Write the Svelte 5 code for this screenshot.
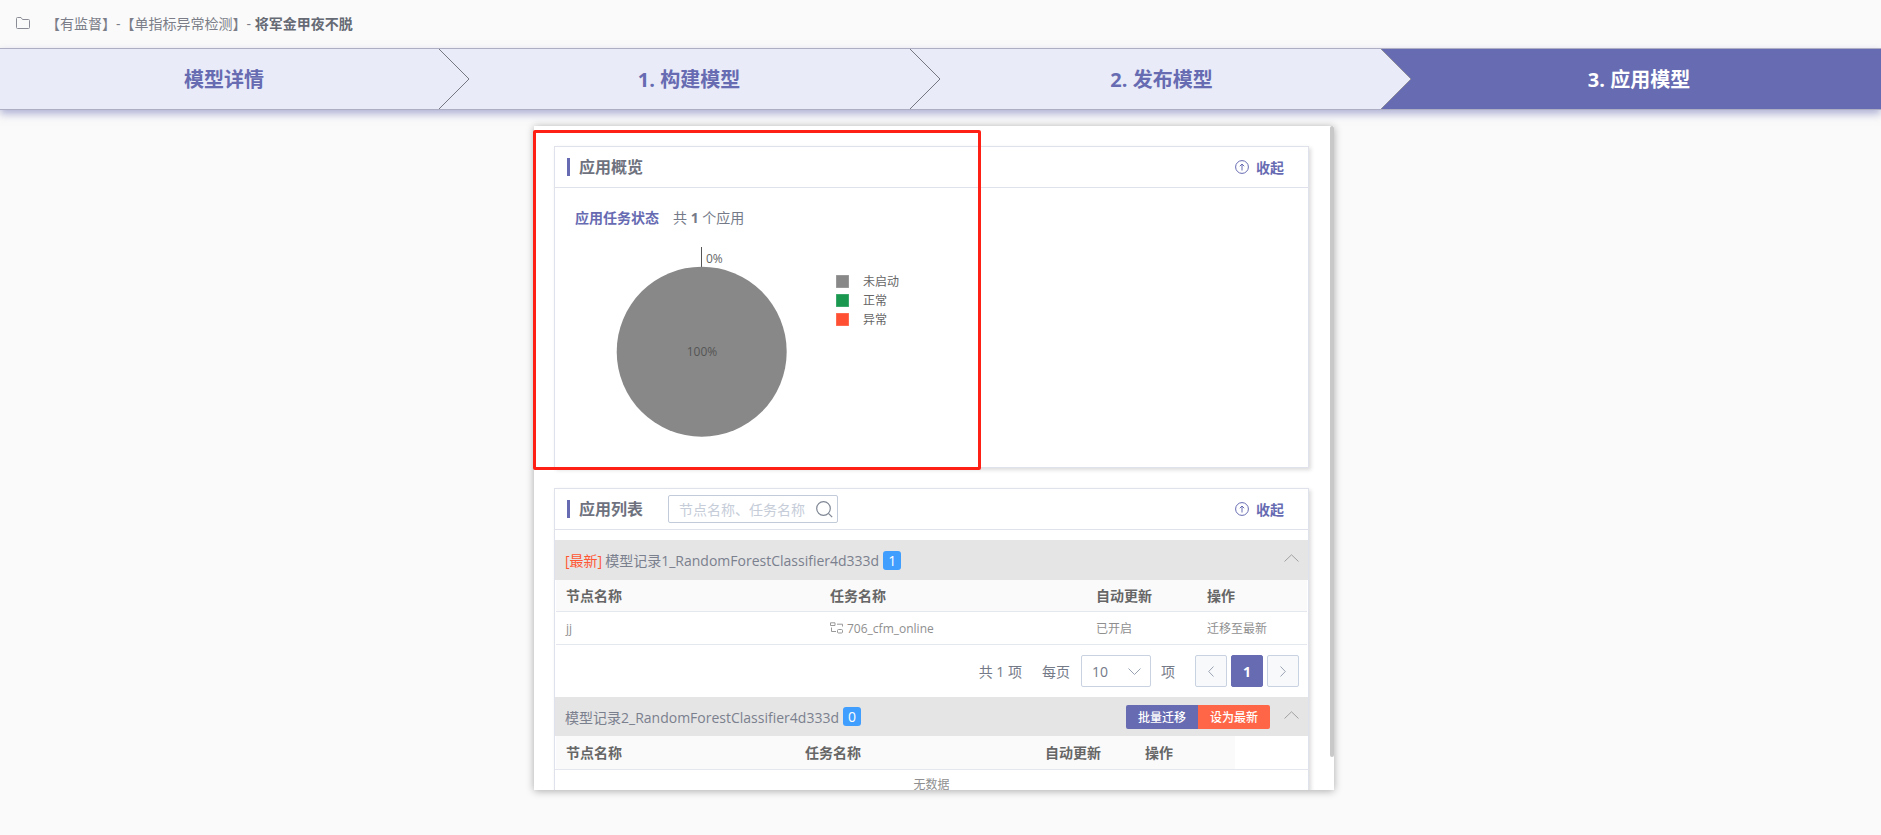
<script>
  const steps = ['模型详情', '1. 构建模型', '2. 发布模型', '3. 应用模型'];
  const legend = [
    { label: '未启动', color: '#888888', y: 35 },
    { label: '正常', color: '#1a9850', y: 54 },
    { label: '异常', color: '#ff5033', y: 73 }
  ];
</script>

<div class="page">
  <div class="crumb">
    <svg class="folder" viewBox="0 0 14 12" width="14" height="12" fill="none" stroke="#8a8d96" stroke-width="1">
      <path d="M0.5 10.5V1.5Q0.5 0.5 1.5 0.5H5L6.5 2.5H12.5Q13.5 2.5 13.5 3.5V10.5Q13.5 11.5 12.5 11.5H1.5Q0.5 11.5 0.5 10.5Z" />
    </svg>
    <span class="crumb-text">【有监督】-【单指标异常检测】- <b>将军金甲夜不脱</b></span>
  </div>

  <nav class="steps">
    {#each steps as step, i}
      <div class="step s{i}" class:active={i === 3}>
        <span>{step}</span>
        {#if i === 2}
          <svg class="tip" viewBox="0 0 30 60" preserveAspectRatio="none">
            <path d="M0 0H30V60H0L30 30Z" fill="#676bb2" />
            <path d="M0 0L30 30L0 60" fill="none" stroke="#8d8d9a" stroke-width="1" />
          </svg>
        {:else if i < 2}
          <svg class="tip" viewBox="0 0 30 60" preserveAspectRatio="none">
            <path d="M0 0L30 30L0 60" fill="none" stroke="#77777f" stroke-width="1" />
          </svg>
        {/if}
      </div>
    {/each}
  </nav>

  <div class="panel-wrap">
    <div class="panel">
      <section class="card first">
        <header class="card-head">
          <h2>应用概览</h2>
          <button class="fold">
            <svg viewBox="0 0 14 14" width="14" height="14" fill="none" stroke="#676bb2" stroke-width="1">
              <circle cx="7" cy="7" r="6.4" /><path d="M7 10.5V4M4.8 6.2L7 4L9.2 6.2" />
            </svg>
            收起
          </button>
        </header>
        <div class="overview">
          <p class="status"><b>应用任务状态</b><span>共 <i>1</i> 个应用</span></p>
          <svg class="chart" viewBox="0 0 300 210" width="300" height="210">
            <line x1="127.5" y1="7" x2="127.5" y2="27" stroke="#555" stroke-width="1" />
            <circle cx="127.7" cy="111.7" r="85" fill="#888888" />
            <text x="132" y="23" class="lab">0%</text>
            <text x="128" y="116" class="lab mid" text-anchor="middle">100%</text>
            {#each legend as item}
              <rect x="262" y={item.y} width="13" height="13" fill={item.color} stroke="#fff" stroke-opacity=".3" />
              <text x="289" y={item.y + 11} class="lab">{item.label}</text>
            {/each}
          </svg>
        </div>
      </section>

      <section class="card">
        <header class="card-head">
          <h2>应用列表</h2>
          <div class="search">
            <span>节点名称、任务名称</span>
            <svg viewBox="0 0 17 17" width="17" height="17" fill="none" stroke="#7f8794" stroke-width="1.2">
              <circle cx="7.5" cy="7.5" r="6.8" /><path d="M12.4 12.4L16.2 16.2" />
            </svg>
          </div>
          <button class="fold">
            <svg viewBox="0 0 14 14" width="14" height="14" fill="none" stroke="#676bb2" stroke-width="1">
              <circle cx="7" cy="7" r="6.4" /><path d="M7 10.5V4M4.8 6.2L7 4L9.2 6.2" />
            </svg>
            收起
          </button>
        </header>

        <div class="group g1">
          <div class="group-name">
            <em>[最新]</em> 模型记录1_RandomForestClassifier4d333d <span class="badge">1</span>
          </div>
          <svg class="caret" viewBox="0 0 15 8" width="15" height="8" fill="none" stroke="#a0a0a0"><path d="M0.5 7.5L7.5 0.8L14.5 7.5" /></svg>
        </div>
        <div class="tbl t1 thead">
          <div>节点名称</div><div>任务名称</div><div>自动更新</div><div>操作</div>
        </div>
        <div class="tbl t1 trow">
          <div>jj</div>
          <div class="task">
            <svg viewBox="0 0 13 12" width="13" height="12" fill="none" stroke="#999" stroke-width="1">
              <path d="M0.5 0.8H5V3.5H0.5ZM7 2.2H12.5V4.5M1.5 5.5V9.5H6" /><rect x="7.5" y="7.5" width="5" height="3.5" rx="1" />
            </svg>
            706_cfm_online
          </div>
          <div>已开启</div>
          <div>迁移至最新</div>
        </div>
        <div class="pager">
          <span>共 1 项</span>
          <span class="per">每页</span>
          <div class="select">
            <span>10</span>
            <svg viewBox="0 0 13 7" width="13" height="7" fill="none" stroke="#9aa3b2"><path d="M0.5 0.5L6.5 6.5L12.5 0.5" /></svg>
          </div>
          <span>项</span>
          <div class="pages">
            <button class="pg"><svg viewBox="0 0 6 11" width="6" height="11" fill="none" stroke="#9aa3b2"><path d="M5.5 0.5L0.7 5.5L5.5 10.5" /></svg></button>
            <button class="pg on">1</button>
            <button class="pg"><svg viewBox="0 0 6 11" width="6" height="11" fill="none" stroke="#9aa3b2"><path d="M0.5 0.5L5.3 5.5L0.5 10.5" /></svg></button>
          </div>
        </div>

        <div class="group g2">
          <div class="group-name">模型记录2_RandomForestClassifier4d333d <span class="badge">0</span></div>
          <div class="actions">
            <button class="act purple">批量迁移</button>
            <button class="act orange">设为最新</button>
          </div>
          <svg class="caret" viewBox="0 0 15 8" width="15" height="8" fill="none" stroke="#a0a0a0"><path d="M0.5 7.5L7.5 0.8L14.5 7.5" /></svg>
        </div>
        <div class="t2-wrap">
          <div class="tbl t2 thead">
            <div>节点名称</div><div>任务名称</div><div>自动更新</div><div>操作</div>
          </div>
        </div>
        <div class="empty">无数据</div>
      </section>
    </div>
    <div class="scrollbar"></div>
    <div class="mark"></div>
  </div>
</div>

<style>
  :global(body) {
    margin: 0;
    background: #fafafa;
  }
  .page {
    height: 835px;
    overflow: hidden;
    font-family: "Open Sans", "Noto Sans CJK SC", sans-serif;
    color: #666;
  }
  .crumb {
    height: 48px;
    display: flex;
    align-items: center;
    padding: 0 0 2px 16px;
    box-sizing: border-box;
  }
  .folder {
    margin-right: 16px;
  }
  .crumb-text {
    font-size: 14px;
    color: #7b7e88;
  }
  .crumb-text b {
    font-weight: 700;
    color: #666a74;
  }
  .steps {
    display: flex;
    height: 62px;
    box-sizing: border-box;
    border-top: 1px solid #adadc4;
    border-bottom: 1px solid #adadc4;
    background: #e9ebf8;
    box-shadow: 0 4px 8px rgba(103, 107, 178, 0.5);
    position: relative;
  }
  .step {
    position: relative;
    flex: 0 0 471px;
    box-sizing: border-box;
    display: flex;
    align-items: center;
    justify-content: center;
    color: #676bb2;
    font-size: 20px;
    font-weight: 700;
    padding-bottom: 2px;
  }
  .s0 {
    flex-basis: 469px;
    padding-right: 21px;
  }
  .s1 {
    padding-right: 31px;
  }
  .s2 {
    padding-right: 28px;
  }
  .s3 {
    flex: 1;
    padding-right: 14px;
  }
  .active {
    background: #676bb2;
    color: #fff;
  }
  .tip {
    position: absolute;
    top: 0;
    right: 0;
    width: 30px;
    height: 100%;
    display: block;
  }
  .panel-wrap {
    position: relative;
    width: 800px;
    height: 664px;
    margin: 16px 0 0 534px;
    box-shadow: 0 1px 8px rgba(0, 0, 0, 0.32);
  }
  .panel {
    height: 100%;
    box-sizing: border-box;
    padding: 20px 25px 0 20px;
    overflow: hidden;
    background: #fff;
  }
  .card {
    border: 1px solid #dfe2ea;
    background: #fff;
    box-shadow: 2px 2px 4px rgba(0, 0, 0, 0.14);
  }
  .first {
    height: 322px;
    box-sizing: border-box;
    margin-bottom: 20px;
  }
  .card-head {
    height: 41px;
    box-sizing: border-box;
    border-bottom: 1px solid #dfe2ea;
    display: flex;
    align-items: center;
    padding: 0 24px 0 12px;
  }
  h2 {
    margin: 0;
    font-size: 16px;
    font-weight: 700;
    color: #6e727e;
    border-left: 3px solid #676bb2;
    padding-left: 9px;
    line-height: 18px;
  }
  .fold {
    margin-left: auto;
    display: flex;
    align-items: center;
    gap: 7px;
    padding: 0;
    background: none;
    border: 0;
    font: inherit;
    font-size: 14px;
    font-weight: 700;
    color: #676bb2;
  }
  .overview {
    padding: 20px 0 0 20px;
  }
  .status {
    margin: 0;
    font-size: 14px;
    line-height: 20px;
    display: flex;
    gap: 14px;
    color: #747a88;
  }
  .status b {
    font-weight: 700;
    color: #676bb2;
  }
  .status i {
    font-style: normal;
    font-weight: 700;
  }
  .chart {
    display: block;
    margin: 12px 0 0 -1px;
    overflow: visible;
  }
  .lab {
    font-size: 12px;
    fill: #666;
  }
  .mid {
    fill: #555;
  }
  .search {
    width: 170px;
    height: 28px;
    box-sizing: border-box;
    margin-left: 25px;
    border: 1px solid #c2cbd9;
    border-radius: 2px;
    display: flex;
    align-items: center;
    justify-content: space-between;
    padding: 0 4px 0 10px;
    font-size: 14px;
    color: #c6cdd9;
    white-space: nowrap;
  }
  .group {
    height: 40px;
    background: #e5e5e5;
    display: flex;
    align-items: center;
    padding: 0 9px 0 10px;
    font-size: 14px;
    color: #7b808e;
  }
  .g1 {
    margin-top: 10px;
  }
  .g2 {
    height: 39px;
  }
  .group-name {
    display: flex;
    align-items: center;
    gap: 3px;
    white-space: nowrap;
  }
  .group-name em {
    font-style: normal;
    color: #ff5733;
  }
  .badge {
    width: 18px;
    height: 19px;
    border-radius: 3px;
    background: #409eff;
    color: #fff;
    font-weight: 500;
    line-height: 19px;
    text-align: center;
    margin-left: 1px;
  }
  .caret {
    margin-left: auto;
    margin-top: -5px;
  }
  .actions {
    display: flex;
    margin-left: auto;
  }
  .actions + .caret {
    margin-left: 14px;
    margin-top: -4px;
  }
  .act {
    width: 72px;
    height: 24px;
    padding: 0;
    border: 0;
    font: inherit;
    font-size: 12px;
    font-weight: 500;
    color: #fff;
  }
  .purple {
    background: #676bb2;
    border-radius: 2px 0 0 2px;
  }
  .orange {
    background: #ff6647;
    border-radius: 0 2px 2px 0;
  }
  .tbl {
    display: grid;
    align-items: center;
    box-sizing: border-box;
    margin-left: 1px;
    padding-left: 10px;
    border-bottom: 1px solid #e4e7ee;
  }
  .t1 {
    grid-template-columns: 264px 266px 111px 1fr;
    margin-right: 1px;
    height: 33px;
  }
  .thead {
    background: #fafafa;
    font-size: 14px;
    font-weight: 700;
    color: #666;
    padding-bottom: 2px;
  }
  .t1.thead {
    height: 32px;
  }
  .trow {
    font-size: 12px;
    color: #8f8f8f;
  }
  .task {
    display: flex;
    align-items: center;
    gap: 4px;
  }
  .pager {
    height: 52px;
    display: flex;
    align-items: center;
    padding: 0 9px 0 0;
    justify-content: flex-end;
    font-size: 14px;
    color: #747a88;
  }
  .per {
    margin-left: 20px;
  }
  .select {
    width: 70px;
    height: 32px;
    box-sizing: border-box;
    margin: 0 10px 0 11px;
    border: 1px solid #c8d2e0;
    border-radius: 2px;
    display: flex;
    align-items: center;
    justify-content: space-between;
    padding: 0 9px 0 10px;
  }
  .pages {
    display: flex;
    gap: 4px;
    margin-left: 20px;
  }
  .pg {
    width: 32px;
    height: 32px;
    padding: 0;
    display: flex;
    align-items: center;
    justify-content: center;
    background: #f8f9fb;
    border: 1px solid #c8d2e0;
    border-radius: 2px;
    font: inherit;
    font-size: 14px;
    font-weight: 700;
    color: #fff;
  }
  .on {
    background: #676bb2;
    border-color: #676bb2;
  }
  .t2-wrap {
    border-bottom: 1px solid #e4e7ee;
  }
  .t2 {
    grid-template-columns: 239px 240px 100px 1fr;
    width: 679px;
    border-bottom: 0;
    height: 33px;
  }
  .empty {
    text-align: center;
    font-size: 12px;
    line-height: 30px;
    color: #8f8f8f;
    height: 60px;
  }
  .scrollbar {
    position: absolute;
    top: 0;
    right: 0;
    width: 4px;
    height: 631px;
    background: #c8c8c8;
    border-radius: 2px;
  }
  .mark {
    position: absolute;
    left: -1px;
    top: 4px;
    width: 448px;
    height: 340px;
    box-sizing: border-box;
    border: 3px solid #ff2015;
    border-radius: 2px;
  }
</style>
